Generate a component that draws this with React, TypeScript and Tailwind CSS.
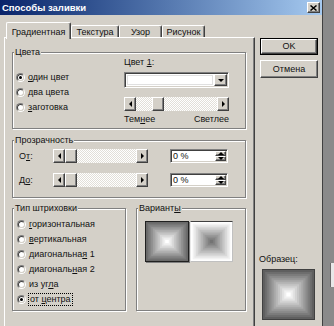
import React from "react";

// classic win 3d borders
const RAISED =
  "bg-[#d4d0c8] border border-t-white border-l-white border-r-[#404040] border-b-[#404040] shadow-[inset_-1px_-1px_#808080]";
const SUNKEN =
  "bg-white border border-t-[#808080] border-l-[#808080] border-r-white border-b-white shadow-[inset_1px_1px_#404040,inset_-1px_-1px_#d4d0c8]";

function Arrow({ dir }: { dir: "left" | "right" | "up" | "down" }) {
  const d = {
    left: "M3 0L0 3L3 6Z",
    right: "M0 0L3 3L0 6Z",
    up: "M0 3L3 0L6 3Z",
    down: "M0 0L6 0L3 3Z",
  }[dir];
  const vert = dir === "up" || dir === "down";
  return (
    <svg width={vert ? 6 : 3} height={vert ? 3 : 6} viewBox={vert ? "0 0 6 3" : "0 0 3 6"}>
      <path d={d} fill="#000" />
    </svg>
  );
}

function Slider({ className, thumb }: { className: string; thumb: string }) {
  return (
    <div className={`flex h-[14px] ${className}`}>
      <div className={`${RAISED} w-[12px] h-full flex items-center justify-center shrink-0`}>
        <Arrow dir="left" />
      </div>
      <div className="flex-1 h-full bg-[repeating-conic-gradient(#ffffff_0_25%,#e2dfd8_0_50%)] bg-[length:2px_2px]">
        <div className={`${RAISED} w-[12px] h-full ${thumb}`} />
      </div>
      <div className={`${RAISED} w-[12px] h-full flex items-center justify-center shrink-0`}>
        <Arrow dir="right" />
      </div>
    </div>
  );
}

function Radio({ checked }: { checked?: boolean }) {
  return (
    <span className="w-[9px] h-[9px] shrink-0 rounded-full border border-t-[#808080] border-l-[#808080] border-b-white border-r-white flex items-center justify-center">
      <span className="w-[7px] h-[7px] rounded-full bg-white border border-t-[#404040] border-l-[#404040] border-b-[#d4d0c8] border-r-[#d4d0c8] flex items-center justify-center">
        {checked && <span className="w-[3px] h-[3px] rounded-full bg-black" />}
      </span>
    </span>
  );
}

function Group({ label, className, children }: { label: React.ReactNode; className: string; children?: React.ReactNode }) {
  return (
    <div className={`relative border border-[#808080] shadow-[inset_1px_1px_#ffffff,1px_1px_#ffffff] ${className}`}>
      <span className="absolute -top-[6px] left-[1px] bg-[#d4d0c8] px-[1px] h-[11px]">{label}</span>
      {children}
    </div>
  );
}

function BoxGrad({ w, h, from, to }: { w: number; h: number; from: number; to: number }) {
  const n = 12;
  const rects = [];
  for (let i = 0; i < n; i++) {
    const t = i / (n - 1);
    const v = Math.round(from + (to - from) * t);
    const x = ((w / 2) * i) / n;
    const y = ((h / 2) * i) / n;
    rects.push(<rect key={i} x={x} y={y} width={w - 2 * x} height={h - 2 * y} fill={`rgb(${v},${v},${v})`} />);
  }
  return (
    <svg width={w} height={h} className="block">
      {rects}
    </svg>
  );
}

const U = ({ children }: { children: React.ReactNode }) => <span className="underline">{children}</span>;

function Spin() {
  return (
    <div className={`${SUNKEN} w-[58px] h-[14px] flex`}>
      <span className="flex-1 pl-[2px] pt-[1px]">0 %</span>
      <div className="w-[12px] flex flex-col py-[1px] pr-[1px]">
        <div className={`${RAISED} h-[6px] flex items-center justify-center`}>
          <Arrow dir="up" />
        </div>
        <div className={`${RAISED} h-[6px] flex items-center justify-center`}>
          <Arrow dir="down" />
        </div>
      </div>
    </div>
  );
}

const hatching: React.ReactNode[] = [
  <><U>г</U>оризонтальная</>,
  <><U>в</U>ертикальная</>,
  <>диагональна<U>я</U> 1</>,
  <>диагональ<U>н</U>ая 2</>,
  <>из уг<U>л</U>а</>,
];

export default function App() {
  return (
    <div className="w-[334px] h-[326px] overflow-hidden flex bg-[#d4d0c8] text-[#111] text-[9px] leading-[11px] font-['Liberation_Sans',Arial,sans-serif]">
      <div className="w-[322px] flex flex-col">
        {/* title */}
        <div className="h-[15px] shrink-0 flex items-center pl-[2px] bg-gradient-to-r from-[#0a246a] to-[#a6caf0]">
          <span className="text-white font-bold text-[9.5px]">Способы заливки</span>
          <div className={`${RAISED} ml-auto mr-[2px] w-[13px] h-[11px] flex items-center justify-center`}>
            <svg width="7" height="6" viewBox="0 0 7 6">
              <path d="M0.5 0.5L6.5 5.5M6.5 0.5L0.5 5.5" stroke="#000" strokeWidth="1.5" />
            </svg>
          </div>
        </div>

        <div className="flex pl-[4px] pt-[7px]">
          <div className="w-[251px] flex flex-col">
            {/* tabs */}
            <div className="h-[15px] flex items-end">
              <div className="relative z-10 ml-[2px] w-[65px] h-[17px] mb-[-2px] bg-[#d4d0c8] rounded-t-[2px] border-t border-l border-r border-t-white border-l-white border-r-[#404040] shadow-[inset_-1px_0_#808080] text-center pt-[4px]">
                Градиентная
              </div>
              <div className="w-[48px] h-[12px] rounded-t-[2px] border-t border-l border-r border-t-white border-l-white border-r-[#404040] shadow-[inset_-1px_0_#808080] text-center pt-[1px]">
                Текстура
              </div>
              <div className="w-[43px] h-[12px] rounded-t-[2px] border-t border-l border-r border-t-white border-l-white border-r-[#404040] shadow-[inset_-1px_0_#808080] text-center pt-[1px]">
                Узор
              </div>
              <div className="w-[43px] h-[12px] rounded-t-[2px] border-t border-l border-r border-t-white border-l-white border-r-[#404040] shadow-[inset_-1px_0_#808080] text-center pt-[1px]">
                Рисунок
              </div>
            </div>

            {/* panel */}
            <div className="h-[300px] border-t border-l border-r border-t-white border-l-white border-r-[#404040] shadow-[inset_-1px_0_#808080] pl-[7px] pt-[14px]">
              <Group label="Цвета" className="w-[234px] h-[77px] flex">
                <div className="w-[111px] pl-[3px] pt-[17px] flex flex-col">
                  <div className="h-[15px] flex items-center gap-[3px]">
                    <Radio checked />
                    <span>
                      <U>о</U>дин цвет
                    </span>
                  </div>
                  <div className="h-[15px] flex items-center gap-[3px]">
                    <Radio />
                    <span>
                      <U>д</U>ва цвета
                    </span>
                  </div>
                  <div className="h-[15px] flex items-center gap-[3px]">
                    <Radio />
                    <span>
                      <U>з</U>аготовка
                    </span>
                  </div>
                </div>
                <div className="w-[105px] pt-[4px] flex flex-col">
                  <span className="h-[11px]">
                    Цвет <U>1</U>:
                  </span>
                  <div className={`${SUNKEN} mt-[4px] h-[16px] flex p-[1px]`}>
                    <div className="flex-1 m-[1px] border border-[#e0e0e0] bg-white" />
                    <div className={`${RAISED} w-[13px] h-full flex items-center justify-center`}>
                      <Arrow dir="down" />
                    </div>
                  </div>
                  <Slider className="mt-[9px] w-full" thumb="ml-[16px]" />
                  <div className="mt-[3px] h-[11px] flex justify-between">
                    <span>
                      Тем<U>н</U>ее
                    </span>
                    <span>Светлее</span>
                  </div>
                </div>
              </Group>

              <Group label="Прозрачность" className="mt-[11px] w-[234px] h-[58px] pl-[6px] pt-[8px] flex flex-col gap-[10px]">
                <div className="h-[14px] flex items-center">
                  <span className="w-[34px]">
                    О<U>т</U>:
                  </span>
                  <Slider className="w-[95px]" thumb="" />
                  <div className="ml-[22px]">
                    <Spin />
                  </div>
                </div>
                <div className="h-[14px] flex items-center">
                  <span className="w-[34px]">
                    Д<U>о</U>:
                  </span>
                  <Slider className="w-[95px]" thumb="" />
                  <div className="ml-[22px]">
                    <Spin />
                  </div>
                </div>
              </Group>

              <div className="mt-[10px] flex gap-[10px]">
                <Group label="Тип штриховки" className="w-[114px] h-[103px] pl-[4px] pt-[8px] flex flex-col">
                  {hatching.map((t, i) => (
                    <div key={i} className="h-[15px] flex items-center gap-[3px]">
                      <Radio />
                      <span>{t}</span>
                    </div>
                  ))}
                  <div className="h-[15px] flex items-center gap-[2px]">
                    <Radio checked />
                    <span className="border border-dotted border-black px-[1px]">
                      от <U>ц</U>ентра
                    </span>
                  </div>
                </Group>
                <Group
                  label={
                    <>
                      Вариант<U>ы</U>
                    </>
                  }
                  className="w-[110px] h-[103px] pl-[8px] pt-[12px] flex gap-[1px] items-start"
                >
                  <div className="border border-[#202020] shadow-[1px_1px_#808080]">
                    <BoxGrad w={42} h={39} from={105} to={255} />
                  </div>
                  <div className="border border-t-[#404040] border-l-[#e8e8e8] border-r-[#c0c0c0] border-b-[#c0c0c0]">
                    <BoxGrad w={41} h={39} from={255} to={115} />
                  </div>
                </Group>
              </div>
            </div>
          </div>

          {/* buttons */}
          <div className="ml-[5px] flex flex-col">
            <div className="mt-[16px] w-[58px] h-[17px] border border-black">
              <div className={`${RAISED} w-full h-full flex items-center justify-center`}>OK</div>
            </div>
            <div className={`${RAISED} mt-[5px] w-[58px] h-[18px] flex items-center justify-center`}>Отмена</div>
            <span className="mt-[176px] h-[11px] -ml-[1px]">Образец:</span>
            <div className="mt-[4px] ml-[2px] w-[53px] h-[51px] border border-[#404040]">
              <BoxGrad w={51} h={49} from={95} to={255} />
            </div>
          </div>
        </div>
      </div>

      {/* background behind dialog */}
      <div className="w-[12px] h-full flex flex-col border-l border-l-[#404040] bg-[#8a8a8a]">
        <div className="mt-[263px] ml-[7px] w-[4px] h-[24px] bg-[#e8e8e8] border-l border-[#6a6a6a]" />
      </div>
    </div>
  );
}
